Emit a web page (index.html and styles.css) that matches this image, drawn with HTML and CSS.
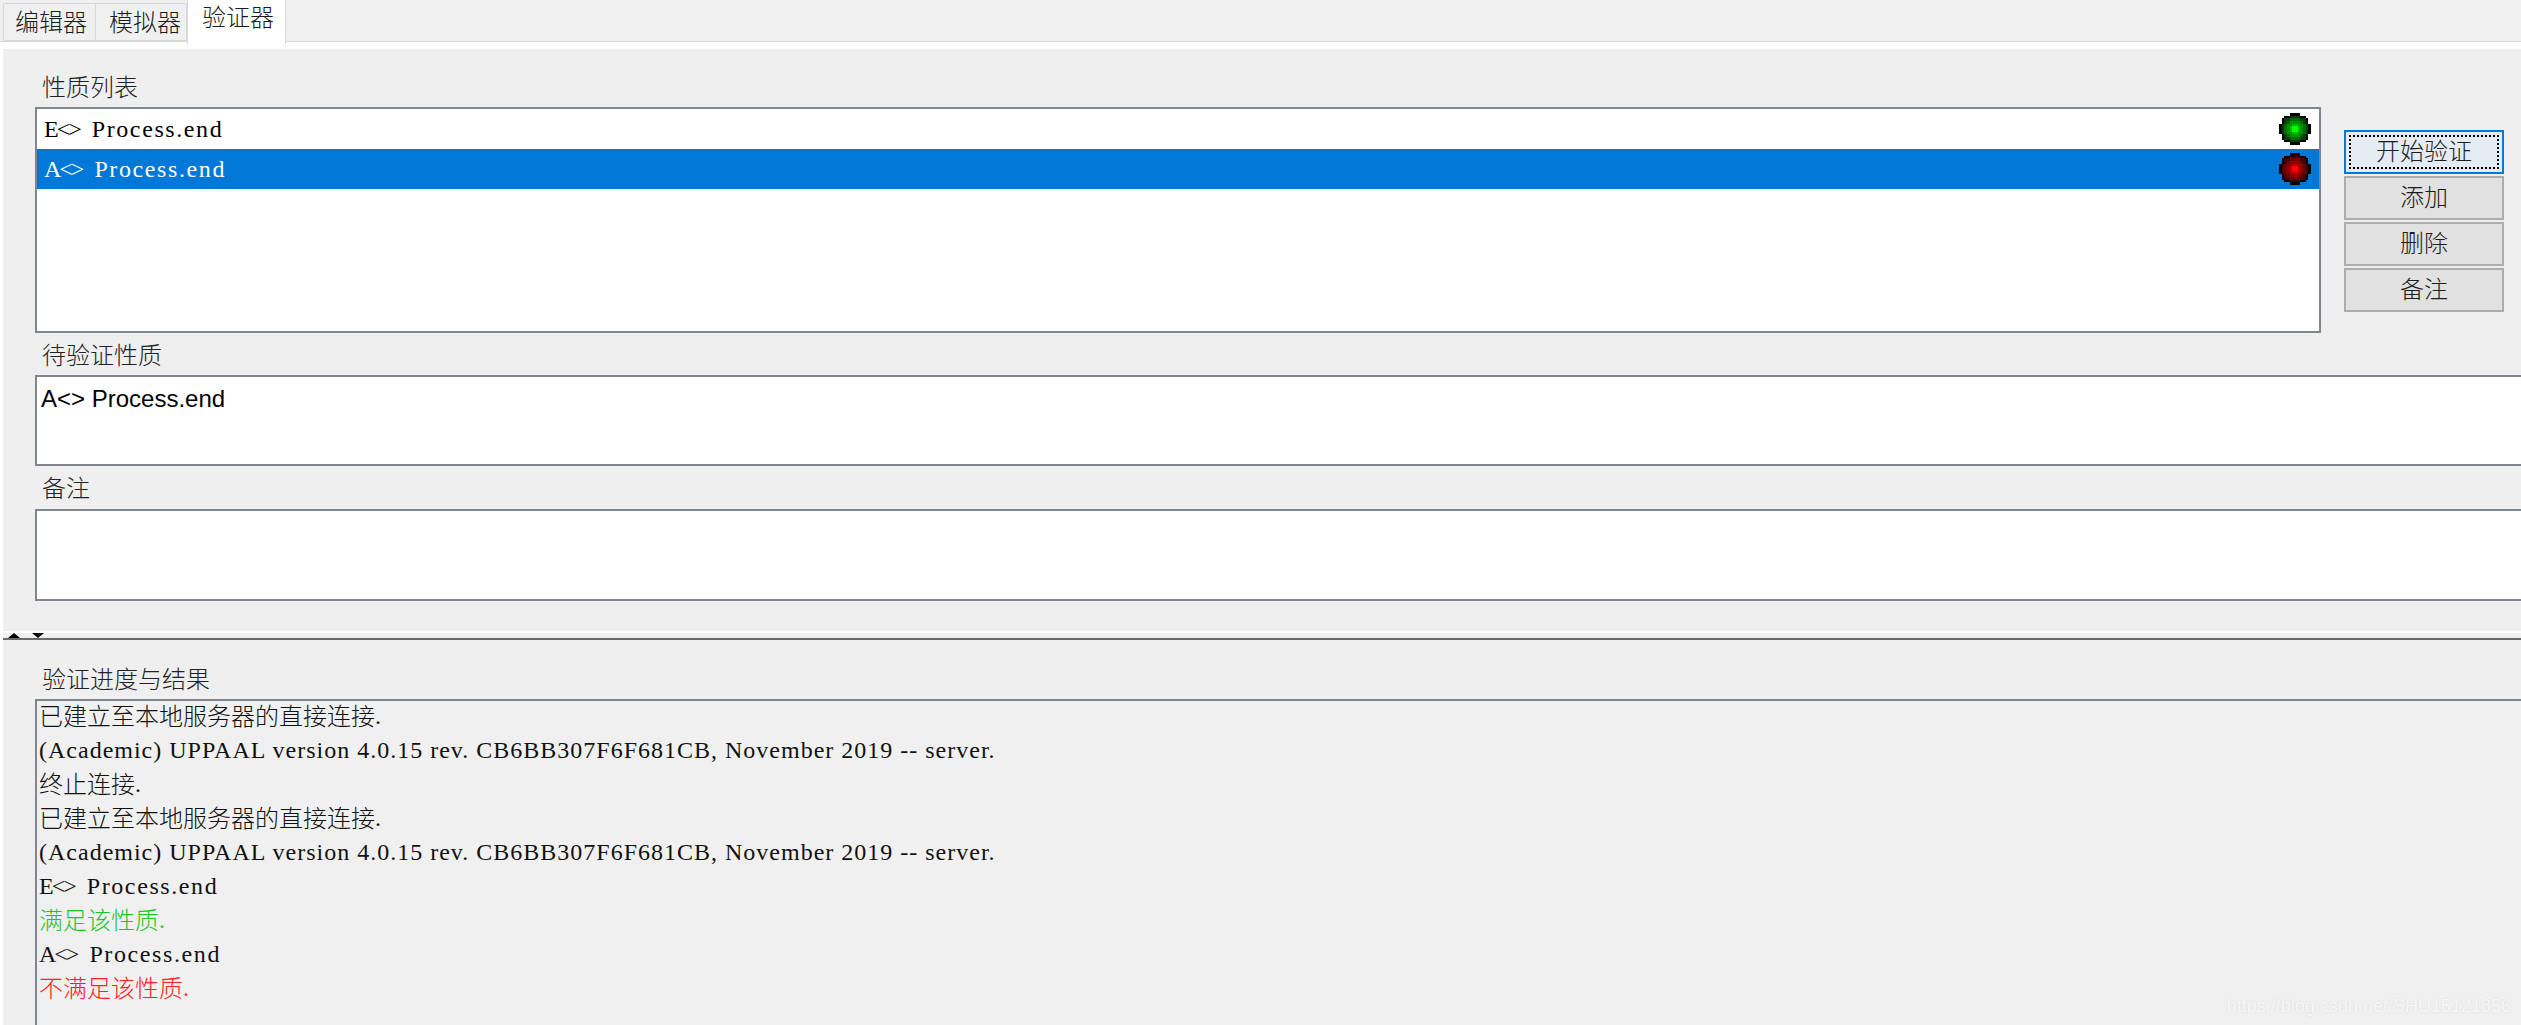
FILE: index.html
```html
<!DOCTYPE html>
<html lang="zh-CN">
<head>
<meta charset="utf-8">
<title>验证器</title>
<link rel="stylesheet" href="styles.css">
</head>
<body>
<svg class="defs" width="0" height="0" aria-hidden="true">
  <symbol id="lamp" viewBox="0 0 12 12">
    <path fill="#000" d="M4 0H8V1H10V2H11V4H12V8H11V10H10V11H8V12H4V11H2V10H1V8H0V4H1V2H2V1H4Z"/>
    <path fill="currentColor" fill-opacity=".25" d="M4 1H8V2H10V4H11V8H10V10H8V11H4V10H2V8H1V4H2V2H4Z"/>
    <path fill="currentColor" fill-opacity=".22" d="M4 2H8V3H9V4H10V8H9V9H8V10H4V9H3V8H2V4H3V3H4Z"/>
    <path fill="currentColor" fill-opacity=".27" d="M4 3H8V4H9V8H8V9H4V8H3V4H4Z"/>
    <path fill="currentColor" fill-opacity=".4" d="M5 4H7V5H8V7H7V8H5V7H4V5H5Z"/>
    <path fill="currentColor" d="M5 5H7V7H5Z"/>
  </symbol>
</svg>
<nav class="tabs">
  <span class="tab tab-editor">编辑器</span>
  <span class="tab tab-sim">模拟器</span>
  <span class="tab tab-active">验证器</span>
</nav>
<main class="page">
  <section class="upper">
    <div class="top-row">
      <div class="list-col">
        <div class="label label-first">性质列表</div>
        <div class="list">
          <div class="row"><span class="query"><span class="op">E&lt;&gt;</span> Process.end</span><svg class="lamp lamp-green"><use href="#lamp"/></svg></div>
          <div class="row row-selected"><span class="query"><span class="op">A&lt;&gt;</span> Process.end</span><svg class="lamp lamp-red"><use href="#lamp"/></svg></div>
        </div>
      </div>
      <div class="buttons">
        <button class="btn btn-focus" type="button"><span class="btn-inner">开始验证</span></button>
        <button class="btn" type="button"><span class="btn-inner">添加</span></button>
        <button class="btn" type="button"><span class="btn-inner">删除</span></button>
        <button class="btn" type="button"><span class="btn-inner">备注</span></button>
      </div>
    </div>
    <div class="label label-second">待验证性质</div>
    <div class="field field-query">A&lt;&gt; Process.end</div>
    <div class="label label-third">备注</div>
    <div class="field"></div>
  </section>
  <div class="splitter">
    <span class="arrow arrow-up"></span>
    <span class="arrow arrow-down"></span>
  </div>
  <section class="lower">
    <div class="label label-result">验证进度与结果</div>
    <div class="log">
      <div class="log-line"><span class="cjk">已建立至本地服务器的直接连接</span>.</div>
      <div class="log-line log-long">(Academic) UPPAAL version 4.0.15 rev. CB6BB307F6F681CB, November 2019 -- server.</div>
      <div class="log-line"><span class="cjk">终止连接</span>.</div>
      <div class="log-line"><span class="cjk">已建立至本地服务器的直接连接</span>.</div>
      <div class="log-line log-long">(Academic) UPPAAL version 4.0.15 rev. CB6BB307F6F681CB, November 2019 -- server.</div>
      <div class="log-line query"><span class="op">E&lt;&gt;</span> Process.end</div>
      <div class="log-line ok"><span class="cjk">满足该性质</span>.</div>
      <div class="log-line query"><span class="op">A&lt;&gt;</span> Process.end</div>
      <div class="log-line bad"><span class="cjk">不满足该性质</span>.</div>
    </div>
  </section>
</main>
<div class="watermark">https://blog.csdn.net/SHU15121856</div>
</body>
</html>
```
FILE: styles.css
```css
* { box-sizing: border-box; }
html, body { margin: 0; height: 100%; }
body {
  position: relative;
  background: #fff;
  overflow: hidden;
  display: flex;
  flex-direction: column;
  font-family: "Liberation Serif", "Noto Sans CJK SC", serif;
  font-size: 24px;
  color: #1c1c1c;
}
.defs { position: absolute; }

.tabs {
  flex: none;
  display: flex;
  height: 42px;
  padding-left: 3px;
  background: #f0f0f0;
  border-bottom: 1px solid #d9d9d9;
}
.tab {
  height: 38px;
  margin-top: 3px;
  font-family: "Noto Sans CJK SC", sans-serif;
  font-weight: 300;
  font-size: 24px;
  line-height: 34px;
  background: #f0f0f0;
  border: 1px solid #d9d9d9;
}
.tab-editor { width: 93px; padding-left: 11px; }
.tab-sim { width: 91px; padding-left: 13px; border-left: 0; }
.tab-active {
  width: 99px;
  height: 44px;
  margin-top: 0;
  padding-left: 14px;
  line-height: 31px;
  background: #fff;
  border-width: 0 1px;
}

.page {
  flex: 1;
  min-height: 0;
  margin: 7px 0 0 3px;
  display: flex;
  flex-direction: column;
  background: #efefef;
  overflow: hidden;
}
.upper { flex: none; height: 582px; padding-left: 32px; }
.top-row { display: flex; }
.list-col { flex: none; width: 2286px; }

.label {
  padding-left: 7px;
  height: 34px;
  font-family: "Noto Sans CJK SC", sans-serif;
  font-weight: 300;
  font-size: 24px;
  line-height: 34px;
  color: #222;
}
.label-first { margin: 20px 0 4px; }
.label-second { margin: 4px 0 4px; }
.label-third { margin: 4px 0 5px; }
.label-result { margin: 21px 0 4px 32px; }

.list {
  height: 226px;
  background: #fff;
  border: 2px solid #80858f;
}
.row {
  height: 40px;
  display: flex;
  align-items: center;
  justify-content: space-between;
  padding: 0 8px 0 7px;
  color: #000;
  line-height: 30px;
}
.query { letter-spacing: 1.6px; word-spacing: 4.4px; }
.op { letter-spacing: -2px; }
.row-selected { background: #0078d7; color: #fff; }
.lamp { width: 32px; height: 32px; display: block; shape-rendering: crispEdges; }
.lamp-green { color: #00ff00; }
.lamp-red { color: #ff0000; }

.buttons {
  flex: none;
  width: 160px;
  margin: 81px 0 0 23px;
  display: flex;
  flex-direction: column;
  gap: 2px;
}
.btn {
  height: 44px;
  padding: 0 0 5px;
  background: #e1e1e1;
  border: 2px solid #adadad;
  font-family: "Noto Sans CJK SC", sans-serif;
  font-weight: 300;
  font-size: 24px;
  line-height: 30px;
  color: #1c1c1c;
}
.btn-inner { display: block; }
.btn-focus { background: #e5ebf2; border-color: #0078d7; padding: 3px; }
.btn-focus .btn-inner { height: 34px; border: 2px dotted #000; line-height: 26px; }

.field {
  height: 92px;
  margin-right: -20px;
  padding: 5px 4px 0;
  background: #fff;
  border: 2px solid #80858f;
  font-family: "Liberation Sans", sans-serif;
  font-size: 24px;
  line-height: 34px;
  color: #000;
}
.field-query { height: 91px; }

.splitter {
  flex: none;
  height: 9px;
  padding-left: 5px;
  display: flex;
  gap: 12px;
  background: #efefef;
  border-top: 2px solid #fff;
  border-bottom: 2px solid #696969;
}
.arrow { width: 12px; height: 5px; background: #000; }
.arrow-up { clip-path: polygon(50% 0, 100% 100%, 0 100%); }
.arrow-down { clip-path: polygon(0 0, 100% 0, 50% 100%); }

.lower { flex: 1; min-height: 0; display: flex; flex-direction: column; }
.log {
  flex: 1;
  margin: 0 -20px -20px 32px;
  padding-left: 2px;
  background: #f0f0f0;
  border: 2px solid #80858f;
  color: #111;
}
.log-line { height: 34px; line-height: 30px; white-space: nowrap; }
.log-long { letter-spacing: 1px; }
.cjk {
  font-family: "Noto Sans CJK SC", sans-serif;
  font-weight: 300;
  line-height: 1;
  vertical-align: -1px;
}
.ok { color: #1fc41f; }
.bad { color: #ff2020; }

.watermark {
  position: absolute;
  right: 10px;
  bottom: 9px;
  font-family: "Liberation Sans", sans-serif;
  font-size: 18px;
  line-height: 20px;
  color: #f7f7f7;
  text-shadow: 0 0 2px #d8d8d8;
}
```
